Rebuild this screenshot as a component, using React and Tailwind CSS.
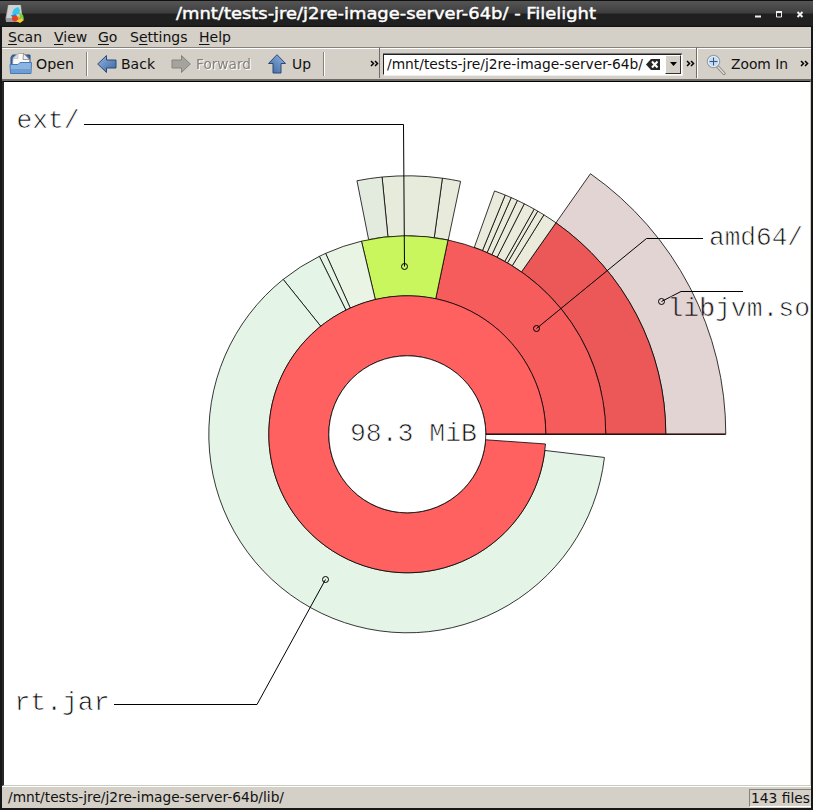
import React from "react";

const CX = 407.3;
const CY = 434.3;

const pt = (r, deg) => {
  const a = (deg * Math.PI) / 180;
  return `${(CX + r * Math.cos(a)).toFixed(2)} ${(CY - r * Math.sin(a)).toFixed(2)}`;
};

const wedge = (r, a, b) => {
  const big = b - a > 180 ? 1 : 0;
  const o = r + 60;
  return `M${pt(r, a)}L${pt(o, a)}A${o} ${o} 0 ${big} 0 ${pt(o, b)}L${pt(r, b)}A${r} ${r} 0 ${big} 1 ${pt(r, a)}Z`;
};

const SEGMENTS = [
  [258.5, 0, 54.9, "#e2d4d3"],
  [198.5, 0, 54.9, "#ec5858"],
  [198.5, 54.9, 58.1, "#ebebdc"],
  [198.5, 58.1, 59.7, "#ebebdc"],
  [198.5, 59.7, 60.6, "#ebebdc"],
  [198.5, 60.6, 63.1, "#ebebdc"],
  [198.5, 63.1, 64.8, "#ebebdc"],
  [198.5, 64.8, 66.3, "#ebebdc"],
  [198.5, 66.3, 67.75, "#ebebdc"],
  [198.5, 67.75, 70.28, "#eaebdc"],
  [198.5, 78.1, 82.2, "#e8ebdc"],
  [198.5, 82.2, 95.6, "#e7ebdc"],
  [198.5, 95.6, 101.23, "#e3ebdf"],
  [138.5, 0, 78.17, "#f65c5c"],
  [138.5, 78.17, 103.35, "#c8f65c"],
  [138.5, 103.35, 114.3, "#e9f4e4"],
  [138.5, 114.3, 116.3, "#e5f4e6"],
  [138.5, 116.3, 128.7, "#e4f4e7"],
  [138.5, 128.7, 353.3, "#e4f4e7"],
  [78.5, 0, 356, "#ff6060"],
];

const LABELS = [
  ["ext/", 16.5, 128, 63],
  ["amd64/", 709, 245, 94],
  ["rt.jar", 14.5, 710, 95],
  ["98.3 MiB", 350, 441, 127],
];

function Label({ x, y, w, children }) {
  return (
    <text x={x} y={y} textLength={w} lengthAdjust="spacingAndGlyphs">
      {children}
    </text>
  );
}

function RadialMap() {
  return (
    <svg width="806" height="703" viewBox="4 82 806 703" className="block">
      <g stroke="#000" strokeOpacity="0.78" strokeWidth="1" strokeLinejoin="bevel">
        {SEGMENTS.map(([r, a, b, c], i) => (
          <path key={i} d={wedge(r, a, b)} fill={c} />
        ))}
        <circle cx={CX} cy={CY} r="78.5" fill="#fff" />
      </g>
      <path d="M485.5 434.2H725.5" stroke="#301010" strokeWidth="1.4" />
      <g fill="none" stroke="#000" strokeWidth="1">
        <path d="M84 124.5H403.5L404.5 266.5" />
        <path d="M703 238.5H646.5L536.5 328.5" />
        <path d="M743 291.5H681L661.5 301.5" />
        <path d="M114 704.5H257L325.5 579.5" />
        <circle cx="404.5" cy="266.5" r="3" />
        <circle cx="536.5" cy="328.5" r="3" />
        <circle cx="661.5" cy="301.5" r="3" />
        <circle cx="325.5" cy="579.5" r="3" />
      </g>
      <g
        fill="#111"
        stroke="#fff"
        strokeWidth="0.7"
        className="font-['Liberation_Mono',monospace] text-[26.5px]"
      >
        {LABELS.map(([t, x, y, w]) => (
          <Label key={t} x={x} y={y} w={w}>{t}</Label>
        ))}
        <Label x={667.5} y={316} w={142.5}>
          <tspan stroke="#e2d4d3">lib</tspan>jvm.so
        </Label>
      </g>
    </svg>
  );
}

function AppIcon() {
  return (
    <svg width="21" height="21" viewBox="0 0 21 21">
      <path d="M3 1h13l1.500 13-1 4H1l-.5-4z" fill="#9c9c9c" />
      <path d="M3.500 1h12l1.500 13H1.500z" fill="#d2d2d2" />
      <path d="M9 5l4-2 2 3-1 4-5 1-2-2z" fill="#35c6ee" />
      <path d="M6 11l5-1 1 3-4 2z" fill="#1c8fe8" />
      <circle cx="10" cy="14.500" r="3" fill="#e8401e" />
      <path d="M14 8l4 3 1 4-4-1z" fill="#6fd23a" />
      <path d="M12 12l3 1-1 3z" fill="#f7a01b" />
      <path d="M11 17l6-3 2 2-4 3z" fill="#f4cf2b" />
    </svg>
  );
}

function FolderIcon() {
  return (
    <svg width="24" height="24" viewBox="0 0 24 24">
      <path d="M2 5.5l1.500-2.500h17.500v12H2z" fill="#386ba9" stroke="#274f85" />
      <path d="M3.500 14l.5-8 5-4.500h6l5.500 6V14z" fill="#fafafa" stroke="#999" strokeWidth=".7" />
      <path d="M4 6.500h5V1.500z" fill="#ddd" stroke="#aaa" strokeWidth=".5" />
      <path d="M14.500 1.500l-.5 6h6.500z" fill="#eee" stroke="#777" strokeWidth=".7" />
      <path d="M1 12.500h8l2-2h11.500l-.5 11H1.500z" fill="#8cb4e1" stroke="#4779b4" />
      <path d="M2 17h19.500v4H2z" fill="#6d9dd3" />
    </svg>
  );
}

function Arrow({ kind }) {
  const fill = kind === "off" ? "#a4a39e" : "url(#arrowBlue)";
  const turn = kind === "up" ? "rotate(90 10 10)" : kind === "off" ? "rotate(180 10 10)" : undefined;
  return (
    <svg width="20" height="20" viewBox="0 0 20 20">
      <defs>
        <linearGradient id="arrowBlue" x1="0" y1="0" x2="1" y2="1">
          <stop offset="0" stopColor="#94b5df" />
          <stop offset="1" stopColor="#3b659f" />
        </linearGradient>
      </defs>
      <path
        d="M.7 10L9.500 1.500V6H19v8H9.500v4.500z"
        fill={fill}
        stroke={kind === "off" ? "#858480" : "#294b7c"}
        strokeLinejoin="round"
        transform={turn}
      />
    </svg>
  );
}

function ZoomIcon() {
  return (
    <svg width="20" height="21" viewBox="0 0 20 21">
      <path d="M11.500 12.500l6.500 7" stroke="#85837f" strokeWidth="3.200" strokeLinecap="round" />
      <path d="M12 13l6 6.500" stroke="#deddd9" strokeWidth="1.500" strokeLinecap="round" />
      <circle cx="7.500" cy="7.500" r="6.200" fill="#c3d9f1" stroke="#9ba0a6" strokeWidth="1.200" />
      <circle cx="7.500" cy="7.500" r="5" fill="none" stroke="#edf4fb" />
      <path d="M3.500 7.500h8M7.500 3.500v8" stroke="#2f5684" strokeWidth="1" />
    </svg>
  );
}

function Chevrons() {
  return (
    <svg width="9" height="8" viewBox="0 0 9 8" className="shrink-0">
      <path d="M1 1l2.500 2.500L1 6M5 1l2.500 2.500L5 6" fill="none" stroke="#000" strokeWidth="1.500" />
    </svg>
  );
}

function T({ w, children, className = "", size = "text-[14px]", h = 20, base = 15, fill = "#111" }) {
  return (
    <svg width={w} height={h} className={`shrink-0 overflow-visible ${size} ${className}`} fill={fill}>
      <text x="0" y={base} textLength={w} lengthAdjust="spacingAndGlyphs">{children}</text>
    </svg>
  );
}

const MENU = [
  ["S", "can", "w-[46px]"],
  ["V", "iew", "w-[44px]"],
  ["G", "o", "w-[32px]"],
  ["S", "e", "w-[69px]", "ttings"],
  ["H", "elp", "w-[50px]"],
];

function Separator({ className = "" }) {
  return <div className={`h-6 w-[2px] shrink-0 border-l border-[#85817b] bg-white ${className}`} />;
}

export default function App() {
  return (
    <div className="flex h-[810px] w-[813px] flex-col overflow-hidden bg-[#171717] font-['DejaVu_Sans',sans-serif] text-black">
      <header className="flex h-[27px] shrink-0 items-center border-t border-[#101010] bg-[linear-gradient(#555_0px,#3e3e3e_12px,#202020_13px,#202020_24px,#111_26px)]">
        <div className="ml-[5px] w-[171px]"><AppIcon /></div>
        <T w={420} size="text-[16.5px]" h={24} base={17} fill="#fff" className="stroke-white [stroke-width:0.45px]">
          /mnt/tests-jre/j2re-image-server-64b/ - Filelight
        </T>
        <svg width="52" height="12" viewBox="0 0 52 12" className="ml-[158px] shrink-0">
          <path d="M1 8.500h6" stroke="#eee" strokeWidth="2" />
          <path d="M22.500 4h5v5h-5z" fill="none" stroke="#eee" strokeWidth="1" />
          <path d="M22 4h6" stroke="#eee" strokeWidth="2" />
          <path d="M43.500 4l5 5M48.500 4l-5 5" stroke="#eee" strokeWidth="2" />
        </svg>
      </header>

      <div className="ml-[2px] flex w-[809px] grow flex-col overflow-hidden bg-[#d4cfc7]">
        <nav className="flex h-5 shrink-0 items-center pl-[6px] text-[14px] leading-5 text-[#111]">
          {MENU.map(([a, b, w, c], i) => (
            <div key={i} className={`${w} shrink-0 whitespace-nowrap`}>
              <span className={c ? "" : "underline underline-offset-2"}>{a}</span>
              <span className={c ? "underline underline-offset-2" : ""}>{b}</span>
              {c}
            </div>
          ))}
        </nav>

        <div className="flex h-[34px] shrink-0 border-b-2 border-[#6f6b65] pb-px">
          <section className="flex w-[378px] shrink-0 items-center border-t border-r border-[#85817b] border-r-[#6f6b65] pt-[2px] shadow-[inset_0_1px_#fff]">
            <div className="ml-[7px] w-[27px]"><FolderIcon /></div>
            <T w={38}>Open</T>
            <Separator className="ml-3" />
            <div className="ml-[9px] w-[24px]"><Arrow kind="back" /></div>
            <T w={34}>Back</T>
            <div className="ml-4 w-[25px]"><Arrow kind="off" /></div>
            <T w={55} fill="#85827d" className="drop-shadow-[1px_1px_0_#fff]">Forward</T>
            <div className="ml-4 w-[25px]"><Arrow kind="up" /></div>
            <T w={19}>Up</T>
            <Separator className="ml-3" />
            <div className="ml-[45px] flex"><Chevrons /></div>
          </section>
          <section className="flex w-[317px] shrink-0 items-center border-t border-r border-[#85817b] border-r-[#6f6b65] pt-[2px] shadow-[inset_0_1px_#fff]">
            <div className="ml-[3px] flex h-[21px] w-[299px] shrink-0 items-center border border-r-white border-b-white border-l-[#222] border-t-[#222] bg-white shadow-[0_-1px_#777,1px_1px_#eee]">
              <T w={256} className="ml-[3px]">/mnt/tests-jre/j2re-image-server-64b/</T>
              <svg width="15" height="11" viewBox="0 0 15 11" className="ml-[3px] shrink-0">
                <path d="M0 5.500L5 0h9v11H5z" fill="#262626" />
                <path d="M6 2.500l5.500 6M11.500 2.500l-5.500 6" stroke="#fff" strokeWidth="2" />
              </svg>
              <div className="ml-[4px] flex h-[19px] w-[16px] shrink-0 items-center justify-center border border-t-white border-r-[#333] border-b-[#333] border-l-white bg-[#d4cfc7]">
                <svg width="7" height="4"><path d="M0 0h7L3.500 4z" /></svg>
              </div>
            </div>
            <div className="ml-[4px] flex"><Chevrons /></div>
          </section>
          <section className="flex grow items-center border-t border-[#85817b] pt-[2px] shadow-[inset_1px_1px_#fff]">
            <div className="ml-[9px] w-[25px]"><ZoomIcon /></div>
            <T w={57}>Zoom In</T>
            <div className="ml-[12px] flex"><Chevrons /></div>
          </section>
        </div>

        <main className="h-[705px] shrink-0 overflow-hidden border-t border-r border-b border-l-2 border-t-black border-r-[#c8cdbf] border-b-[#c8cdbf] border-l-[#282828] bg-white">
          <RadialMap />
        </main>

        <footer className="flex h-[22px] shrink-0 items-center border-t border-white pl-[6px]">
          <T w={276} base={14}>/mnt/tests-jre/j2re-image-server-64b/lib/</T>
          <div className="ml-auto flex h-[18px] w-[62px] items-center border-t border-b border-l border-[#85817b] border-b-white pl-px">
            <T w={59}>143 files</T>
          </div>
        </footer>
      </div>
      <div className="h-[2px] shrink-0" />
    </div>
  );
}
